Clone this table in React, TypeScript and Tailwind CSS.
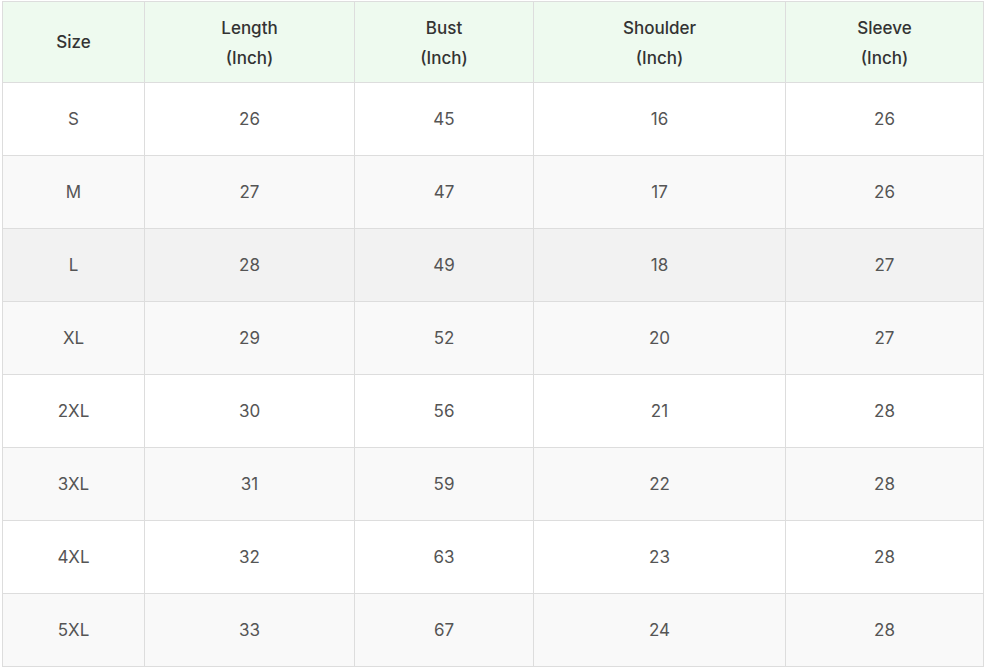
import React from "react";

const ROWS = [
  { size: "S", length: 26, bust: 45, shoulder: 16, sleeve: 26 },
  { size: "M", length: 27, bust: 47, shoulder: 17, sleeve: 26 },
  { size: "L", length: 28, bust: 49, shoulder: 18, sleeve: 27 },
  { size: "XL", length: 29, bust: 52, shoulder: 20, sleeve: 27 },
  { size: "2XL", length: 30, bust: 56, shoulder: 21, sleeve: 28 },
  { size: "3XL", length: 31, bust: 59, shoulder: 22, sleeve: 28 },
  { size: "4XL", length: 32, bust: 63, shoulder: 23, sleeve: 28 },
  { size: "5XL", length: 33, bust: 67, shoulder: 24, sleeve: 28 },
];

const HEADERS = ["Length", "Bust", "Shoulder", "Sleeve"];

export default function App() {
  return (
    <div
      className="bg-white pl-[2px] pt-[1px]"
      style={{ fontFamily: "Inter, 'DejaVu Sans', sans-serif" }}
    >
      <table className="w-[981px] table-fixed border-collapse text-center">
        <colgroup>
          <col className="w-[142px]" />
          <col className="w-[210px]" />
          <col className="w-[179px]" />
          <col className="w-[252px]" />
          <col className="w-[198px]" />
        </colgroup>
        <thead>
          <tr className="h-[81px] bg-[#eefaef]">
            <th className="border border-[#dddddd] pt-[1px] text-[17px] font-medium text-[#333333]">
              Size
            </th>
            {HEADERS.map((h) => (
              <th
                key={h}
                className="border border-[#dddddd] pt-[2px] text-[17px] font-medium leading-[30px] text-[#333333]"
              >
                {h}
                <br />
                (Inch)
              </th>
            ))}
          </tr>
        </thead>
        <tbody>
          {ROWS.map((r, i) => {
            // L row is highlighted (hovered in the shot)
            const bg =
              r.size === "L"
                ? "bg-[#f2f2f2]"
                : i % 2 === 1
                ? "bg-[#f9f9f9]"
                : "bg-white";
            return (
              <tr key={r.size} className={`h-[73px] ${bg}`}>
                <td className="border border-[#dddddd] pt-[1px] text-[17px] text-[#555555]">{r.size}</td>
                <td className="border border-[#dddddd] pt-[1px] text-[17px] text-[#555555]">{r.length}</td>
                <td className="border border-[#dddddd] pt-[1px] text-[17px] text-[#555555]">{r.bust}</td>
                <td className="border border-[#dddddd] pt-[1px] text-[17px] text-[#555555]">{r.shoulder}</td>
                <td className="border border-[#dddddd] pt-[1px] text-[17px] text-[#555555]">{r.sleeve}</td>
              </tr>
            );
          })}
        </tbody>
      </table>
    </div>
  );
}
